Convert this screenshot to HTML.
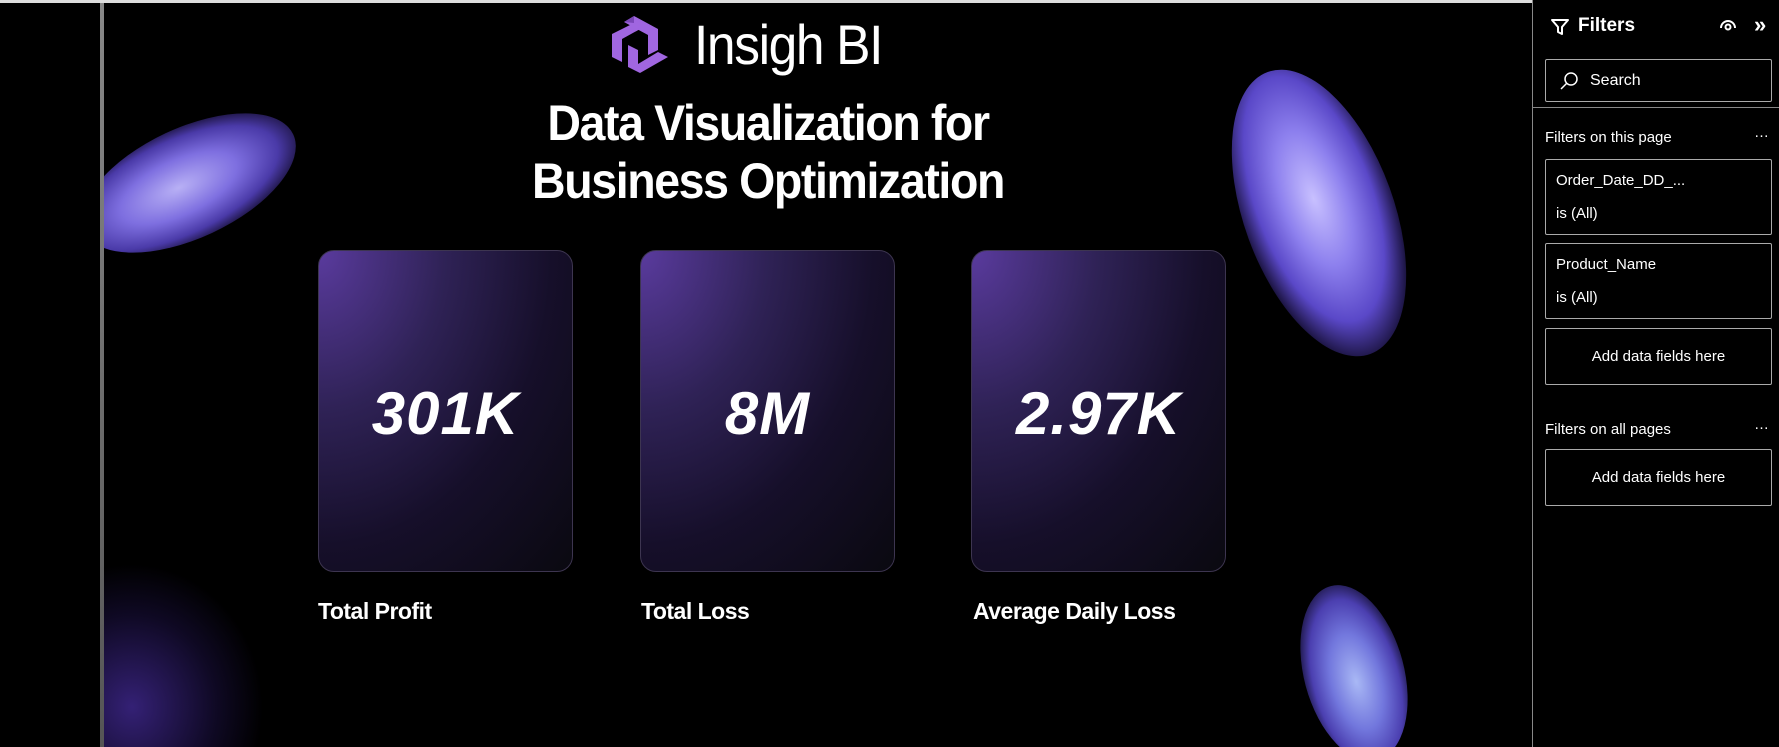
<!DOCTYPE html>
<html><head><meta charset="utf-8"><style>
*{margin:0;padding:0;box-sizing:border-box}
body{width:1779px;height:747px;background:#000;position:relative;overflow:hidden;font-family:"Liberation Sans",sans-serif;color:#fff}
.abs{position:absolute}
.canvas{left:104px;top:3px;width:1328px;height:744px;background:#000;overflow:hidden}
.strip{left:100px;top:3px;width:4px;height:744px;background:linear-gradient(#888,#555)}
.card{position:absolute;top:250px;width:255px;height:322px;border-radius:16px;border:1.5px solid #3d3550;
background:radial-gradient(ellipse at 0% 0%,#5a3b9e 0%,#2f2256 35%,#160f2a 65%,#0a0910 100%)}
.val{position:absolute;left:0;right:0;top:128px;text-align:center;font-size:60px;font-weight:bold;font-style:italic;letter-spacing:1px}
.lbl{position:absolute;top:598px;font-size:23px;font-weight:bold;letter-spacing:-0.5px}
.title{left:104px;width:1328px;text-align:center;font-size:50px;font-weight:bold;letter-spacing:-1.5px;transform:scaleX(0.93)}
.panel{left:1532px;top:0;width:247px;height:747px;border-left:1px solid #888;background:#000;font-size:15px}
.box{position:absolute;left:12px;width:227px;border:1px solid #aaa;border-radius:2px}
</style></head><body>
<div class="abs" style="left:0;top:0;width:1779px;height:3px;background:#ddd"></div>
<div class="abs canvas">
 <div class="abs" style="left:-30px;top:125px;width:230px;height:110px;border-radius:50%;background:radial-gradient(ellipse at 45% 50%,#b8b0f5 0%,#7e6fe0 35%,#4a3aa8 60%,rgba(40,20,90,0.3) 80%,transparent 95%);transform:rotate(-25deg)"></div>
 <div class="abs" style="left:-60px;top:560px;width:220px;height:240px;background:radial-gradient(ellipse at 40% 60%,rgba(80,50,180,0.65),rgba(50,30,120,0.3) 45%,transparent 70%)"></div>
 <div class="abs" style="left:1140px;top:60px;width:150px;height:300px;border-radius:50%;background:radial-gradient(ellipse at 50% 45%,#c8c0ff 0%,#8d80ee 30%,#5a48c8 55%,rgba(60,40,150,0.3) 75%,transparent 90%);transform:rotate(-20deg)"></div>
 <div class="abs" style="left:1200px;top:580px;width:100px;height:180px;border-radius:50%;background:radial-gradient(ellipse at 50% 55%,#a9b8f5 0%,#7277dd 35%,#4b3fb0 60%,rgba(60,40,150,0.2) 80%,transparent 95%);transform:rotate(-15deg)"></div>
</div>
<div class="abs strip"></div>
<svg class="abs" style="left:610px;top:12px" width="60" height="64" viewBox="0 0 60 64">
 <g fill="#a066e0">
  <polygon points="24,4 48,17 48,38 38,43 38,23 14,10"/>
  <polygon points="2,22 24,11 32,16 12,27 12,50 2,45"/>
  <polygon points="18,33 28,38 28,52 48,40 58,45 30,61 18,55"/>
 </g>
 <g fill="#7a46b8"><polygon points="14,10 24,4 24,11"/></g>
</svg>
<div class="abs" style="left:694px;top:12px;font-size:56px;letter-spacing:-1.5px;transform:scaleX(0.92);transform-origin:left">Insigh BI</div>
<div class="abs title" style="top:94px">Data Visualization for</div>
<div class="abs title" style="top:152px">Business Optimization</div>
<div class="card" style="left:318px"><div class="val">301K</div></div>
<div class="card" style="left:640px"><div class="val">8M</div></div>
<div class="card" style="left:971px"><div class="val">2.97K</div></div>
<div class="lbl abs" style="left:318px">Total Profit</div>
<div class="lbl abs" style="left:641px">Total Loss</div>
<div class="lbl abs" style="left:973px">Average Daily Loss</div>
<div class="abs panel">
 <svg class="abs" style="left:17px;top:17px" width="20" height="20" viewBox="0 0 20 20"><path d="M2 3h16l-6 7v7l-4-2v-5z" fill="none" stroke="#fff" stroke-width="2" stroke-linejoin="round"/></svg>
 <div class="abs" style="left:45px;top:15px;font-size:19px;font-weight:bold">Filters</div>
 <svg class="abs" style="left:186px;top:18px" width="18" height="14" viewBox="0 0 18 14"><path d="M2 10a7 7 0 0 1 14 0" fill="none" stroke="#fff" stroke-width="2"/><circle cx="9" cy="9" r="2.5" fill="none" stroke="#fff" stroke-width="2"/></svg>
 <div class="abs" style="left:221px;top:12px;font-size:22px;font-weight:bold">»</div>
 <div class="box" style="top:59px;height:43px">
  <svg class="abs" style="left:13px;top:11px" width="20" height="20" viewBox="0 0 20 20"><circle cx="12" cy="8" r="6" fill="none" stroke="#fff" stroke-width="1.5"/><path d="M7.5 12.5L2 18" stroke="#fff" stroke-width="1.5"/></svg>
  <div class="abs" style="left:44px;top:12px;font-size:16px">Search</div>
 </div>
 <div class="abs" style="left:0;top:107px;width:247px;height:1px;background:#888"></div>
 <div class="abs" style="left:12px;top:129px">Filters on this page</div>
 <div class="abs" style="left:221px;top:124px">…</div>
 <div class="box" style="top:159px;height:76px"><div class="abs" style="left:10px;top:12px">Order_Date_DD_...</div><div class="abs" style="left:10px;top:45px">is (All)</div></div>
 <div class="box" style="top:243px;height:76px"><div class="abs" style="left:10px;top:12px">Product_Name</div><div class="abs" style="left:10px;top:45px">is (All)</div></div>
 <div class="box" style="top:328px;height:57px"><div style="text-align:center;padding-top:19px">Add data fields here</div></div>
 <div class="abs" style="left:12px;top:421px">Filters on all pages</div>
 <div class="abs" style="left:221px;top:416px">…</div>
 <div class="box" style="top:449px;height:57px"><div style="text-align:center;padding-top:19px">Add data fields here</div></div>
</div>
</body></html>
